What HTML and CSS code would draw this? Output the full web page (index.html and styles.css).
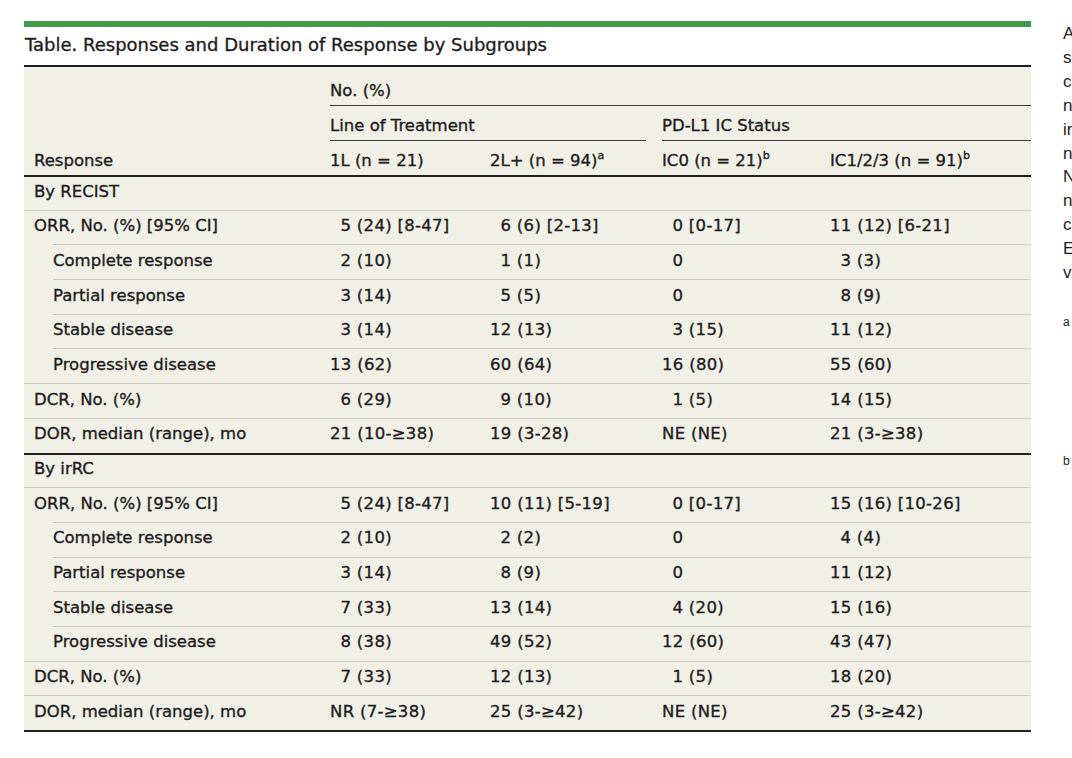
FILE: index.html
```html
<!DOCTYPE html>
<html lang="en">
<head>
<meta charset="utf-8">
<title>Table. Responses and Duration of Response by Subgroups</title>
<link rel="stylesheet" href="styles.css">
</head>
<body>
<div class="page">
  <div class="figure">
    <div class="bar"></div>
    <h1 class="title">Table. Responses and Duration of Response by Subgroups</h1>
    <div class="table">
      <div class="thead">
        <div class="h-no">No. (%)</div>
        <div class="h-lot">Line of Treatment</div>
        <div class="h-pd">PD-L1 IC Status</div>
        <div class="h-label">Response</div>
        <div class="h-col">1L (n = 21)</div>
        <div class="h-col">2L+ (n = 94)<sup class="fn">a</sup></div>
        <div class="h-col">IC0 (n = 21)<sup class="fn">b</sup></div>
        <div class="h-col">IC1/2/3 (n = 91)<sup class="fn">b</sup></div>
      </div>

      <div class="row head"><div class="lab">By RECIST</div></div>
      <div class="row"><div class="lab">ORR, No. (%) [95% CI]</div><div class="v i">5 (24) [8-47]</div><div class="v i">6 (6) [2-13]</div><div class="v i">0 [0-17]</div><div class="v">11 (12) [6-21]</div></div>
      <div class="row sub"><div class="lab">Complete response</div><div class="v i">2 (10)</div><div class="v i">1 (1)</div><div class="v i">0</div><div class="v i">3 (3)</div></div>
      <div class="row sub"><div class="lab">Partial response</div><div class="v i">3 (14)</div><div class="v i">5 (5)</div><div class="v i">0</div><div class="v i">8 (9)</div></div>
      <div class="row sub"><div class="lab">Stable disease</div><div class="v i">3 (14)</div><div class="v">12 (13)</div><div class="v i">3 (15)</div><div class="v">11 (12)</div></div>
      <div class="row sub"><div class="lab">Progressive disease</div><div class="v">13 (62)</div><div class="v">60 (64)</div><div class="v">16 (80)</div><div class="v">55 (60)</div></div>
      <div class="row"><div class="lab">DCR, No. (%)</div><div class="v i">6 (29)</div><div class="v i">9 (10)</div><div class="v i">1 (5)</div><div class="v">14 (15)</div></div>
      <div class="row"><div class="lab">DOR, median (range), mo</div><div class="v">21 (10-≥38)</div><div class="v">19 (3-28)</div><div class="v">NE (NE)</div><div class="v">21 (3-≥38)</div></div>

      <div class="row head"><div class="lab">By irRC</div></div>
      <div class="row"><div class="lab">ORR, No. (%) [95% CI]</div><div class="v i">5 (24) [8-47]</div><div class="v">10 (11) [5-19]</div><div class="v i">0 [0-17]</div><div class="v">15 (16) [10-26]</div></div>
      <div class="row sub"><div class="lab">Complete response</div><div class="v i">2 (10)</div><div class="v i">2 (2)</div><div class="v i">0</div><div class="v i">4 (4)</div></div>
      <div class="row sub"><div class="lab">Partial response</div><div class="v i">3 (14)</div><div class="v i">8 (9)</div><div class="v i">0</div><div class="v">11 (12)</div></div>
      <div class="row sub"><div class="lab">Stable disease</div><div class="v i">7 (33)</div><div class="v">13 (14)</div><div class="v i">4 (20)</div><div class="v">15 (16)</div></div>
      <div class="row sub"><div class="lab">Progressive disease</div><div class="v i">8 (38)</div><div class="v">49 (52)</div><div class="v">12 (60)</div><div class="v">43 (47)</div></div>
      <div class="row"><div class="lab">DCR, No. (%)</div><div class="v i">7 (33)</div><div class="v">12 (13)</div><div class="v i">1 (5)</div><div class="v">18 (20)</div></div>
      <div class="row"><div class="lab">DOR, median (range), mo</div><div class="v">NR (7-≥38)</div><div class="v">25 (3-≥42)</div><div class="v">NE (NE)</div><div class="v">25 (3-≥42)</div></div>
    </div>
  </div>

  <div class="notes">
    <div class="abbr">
      <span class="ln">Abbreviations: 1L, first line; 2L+,</span>
      <span class="ln">second line or later; CI, confidence</span>
      <span class="ln">confidence interval; DCR, disease</span>
      <span class="ln">n control rate; DOR, duration of</span>
      <span class="ln">infiltrating immune cell; irRC,</span>
      <span class="ln">n immune-related response criteria;</span>
      <span class="ln">NE, not estimable; NR, not reached;</span>
      <span class="ln">n ORR, objective response rate;</span>
      <span class="ln">cell death ligand 1; RECIST, Response</span>
      <span class="ln">Evaluation Criteria in Solid Tumors,</span>
      <span class="ln">version 1.1.</span>
    </div>
    <div class="foot fa">
      <span class="ln"><sup class="mark">a</sup> Includes patients who received prior</span>
      <span class="ln cont">systemic therapy for metastatic disease,</span>
      <span class="ln cont">including patients treated in the</span>
      <span class="ln cont">perioperative setting with progression</span>
      <span class="ln cont">within 12 months of the last dose of</span>
      <span class="ln cont">platinum-based chemotherapy.</span>
    </div>
    <div class="foot fb">
      <span class="ln"><sup class="mark">b</sup> Three patients had unknown PD-L1 status.</span>
    </div>
  </div>
</div>
</body>
</html>
```

FILE: styles.css
```css
* {
  box-sizing: border-box;
}

body {
  margin: 0;
  background: #ffffff;
  font-family: "DejaVu Sans", "Liberation Sans", sans-serif;
  color: #1f1c1d;
}

.page {
  display: flex;
  padding: 21px 0 0 24px;
}

.figure {
  flex: none;
  width: 1007px;
  -webkit-text-stroke: 0.35px #1f1c1d;
}

.bar {
  height: 6px;
  background: #3f9c48;
}

.title {
  margin: 0;
  padding: 6px 0 8px 1px;
  font-size: 18px;
  font-weight: normal;
  line-height: 24px;
  border-bottom: 2px solid #231f20;
}

.table {
  background: #f0f0e7;
  border-bottom: 2px solid #231f20;
  font-size: 16.5px;
  line-height: 20px;
}

.thead {
  display: grid;
  grid-template-columns: 306px 160px 172px 168px 201px;
  grid-template-rows: 39px 35px 34px;
}

.h-no {
  grid-column: 2 / 6;
  grid-row: 1;
  padding-top: 14px;
  border-bottom: 1px solid #3a3a3a;
}

.h-lot {
  grid-column: 2 / 4;
  grid-row: 2;
  margin-right: 16px;
  padding-top: 9.6px;
  border-bottom: 1px solid #3a3a3a;
}

.h-pd {
  grid-column: 4 / 6;
  grid-row: 2;
  padding-top: 9.6px;
  border-bottom: 1px solid #3a3a3a;
}

.h-label {
  grid-column: 1;
  grid-row: 3;
  padding: 10px 0 0 10px;
}

.h-col {
  grid-row: 3;
  padding-top: 10px;
}

.fn {
  font-size: 11px;
  line-height: 0;
  vertical-align: 7px;
}

.row {
  display: grid;
  grid-template-columns: 306px 160px 172px 168px 201px;
  height: 34.69px;
  padding-top: 5.5px;
  border-top: 1px solid #c9c9c0;
  white-space: nowrap;
}

.row.head {
  padding-top: 4.5px;
  border-top: 2px solid #231f20;
}

.row.sub {
  margin-left: 29px;
  grid-template-columns: 277px 160px 172px 168px 201px;
}

.lab {
  padding-left: 10px;
}

.row.sub .lab {
  padding-left: 0;
}

.v {
  letter-spacing: 0.3px;
}

.v.i {
  padding-left: 10.5px;
}

.notes {
  flex: 1;
  min-width: 0;
  margin-left: 32px;
  padding-top: 1px;
  overflow: hidden;
  white-space: nowrap;
  font-family: "Liberation Sans", "DejaVu Sans", sans-serif;
  font-size: 17px;
}

.ln {
  display: block;
}

.abbr .ln {
  line-height: 23.9px;
}

.foot {
  font-size: 15px;
  line-height: 20px;
}

.fa {
  margin-top: 26px;
}

.fb {
  margin-top: 19px;
}

.foot .cont {
  padding-left: 12px;
}

.mark {
  font-size: 12px;
  line-height: 0;
  vertical-align: baseline;
}
```
